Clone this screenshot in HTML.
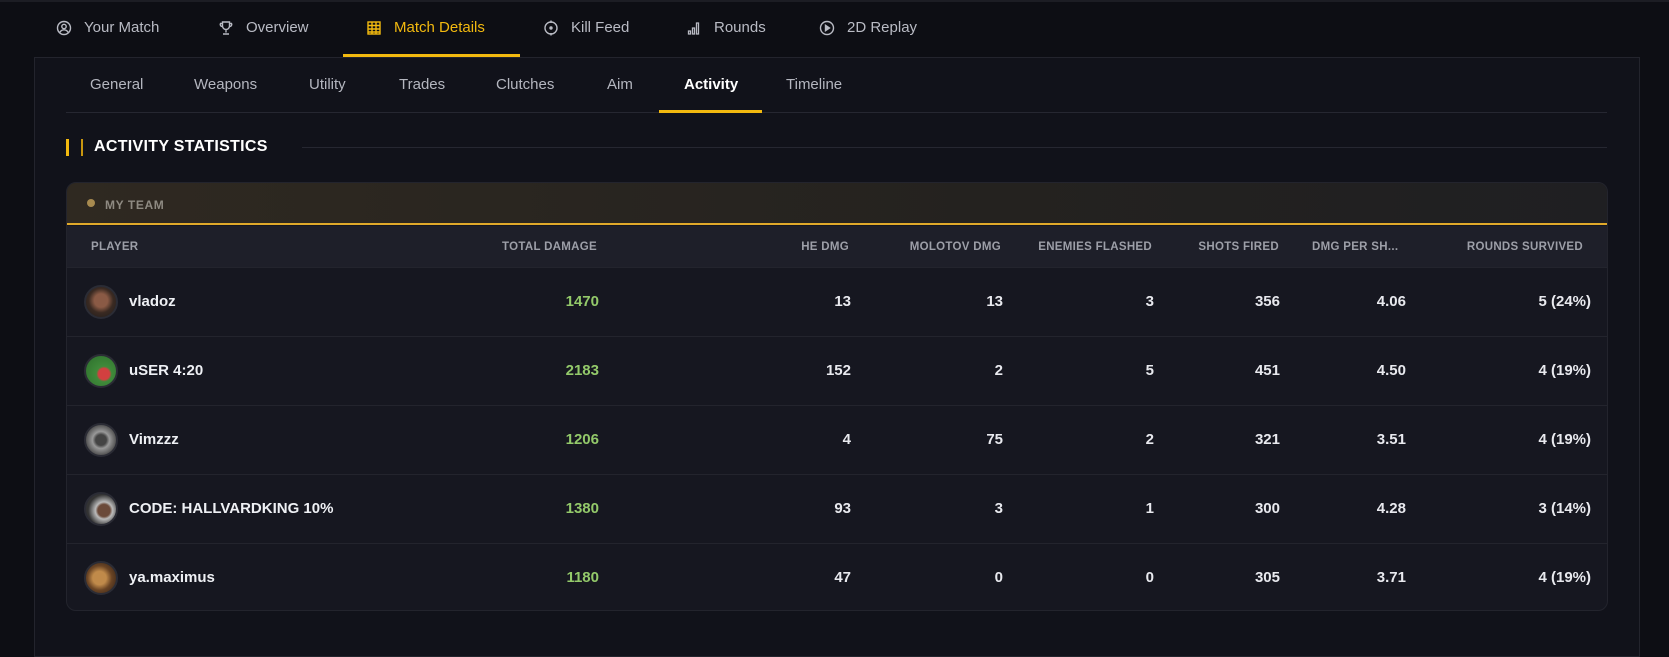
<!DOCTYPE html>
<html><head><meta charset="utf-8"><style>
*{margin:0;padding:0;box-sizing:border-box}
body{width:1669px;height:637px;background:#0d0e14;font-family:"Liberation Sans",sans-serif;position:relative;overflow:hidden;color:#e6e7ec}
.top{position:absolute;left:0;top:0;width:1669px;height:2px;background:#1c1d24}
.nav{position:absolute;top:19px;font-size:15px;color:#b9bbc4;display:flex;align-items:center;gap:12px;font-weight:500}
.nav svg{width:16px;height:16px}
.nav.act{color:#f2b90f}
.navul{position:absolute;left:343px;top:54px;width:177px;height:3px;background:#f2b90f}
.panel{position:absolute;left:34px;top:57px;width:1606px;height:600px;background:#11121a;border:1px solid #23242d}
.sub{position:absolute;top:76px;font-size:15px;color:#b4b6bf;font-weight:500}
.sub.act{color:#fff;font-weight:700}
.subline{position:absolute;left:66px;top:112px;width:1541px;height:1px;background:#262731}
.subul{position:absolute;left:659px;top:110px;width:103px;height:3px;background:#f2b90f}
.bar{position:absolute;top:139px;width:3px;height:17px;background:#f2b90f}
.h{position:absolute;left:94px;top:138px;font-size:16px;font-weight:700;letter-spacing:.3px;color:#fff}
.hline{position:absolute;left:302px;top:147px;width:1305px;height:1px;background:#262731}
.card{position:absolute;left:66px;top:182px;width:1542px;height:429px;background:#161720;border:1px solid #23242d;border-radius:10px;overflow:hidden}
.team{position:absolute;left:0;top:0;width:100%;height:42px;background:linear-gradient(90deg,#2f2921,#24221f 60%,#1f1f22);border-bottom:2px solid #e0a92a}
.team span{position:absolute;left:26px;top:15px;font-size:12px;font-weight:700;color:#8e8a82;letter-spacing:.6px}
.team i{position:absolute;left:24px;top:16px;width:8px;height:8px;border-radius:50%;background:#a78a4f;margin-left:-4px}
.team span{left:38px}
.thead{position:absolute;left:0;top:43px;width:100%;height:42px;background:#1e1f29}
.th{position:absolute;top:15px;font-size:11.5px;font-weight:700;color:#9d9fa8;letter-spacing:.3px;white-space:nowrap}
.row{position:absolute;left:0;width:100%;height:69px;border-top:1px solid #23242d}
.av{position:absolute;left:17px;top:17px;width:34px;height:34px;border-radius:50%;border:2px solid #2b2c35}
.nm{position:absolute;left:62px;top:25px;font-size:15px;font-weight:700;color:#eef0f4}
.v{position:absolute;top:25px;font-size:15px;font-weight:600;color:#e8e9ee;text-align:right;width:100px}
.g{color:#93c96a;font-weight:700}
</style></head><body>
<div class="top"></div>
<div class="nav" style="left:56px"><svg viewBox="0 0 16 16" fill="none" stroke="#b9bbc4" stroke-width="1.4"><circle cx="8" cy="8" r="6.5"/><circle cx="8" cy="6.5" r="2.2"/><path d="M3.8 12.5c1-2 2.5-2.7 4.2-2.7s3.2.7 4.2 2.7"/></svg>Your Match</div>
<div class="nav" style="left:218px"><svg viewBox="0 0 16 16" fill="none" stroke="#b9bbc4" stroke-width="1.4"><path d="M4.5 2h7v4a3.5 3.5 0 0 1-7 0z M4.5 3.5H2.5a2 2 0 0 0 2 3 M11.5 3.5h2a2 2 0 0 1-2 3 M8 9.5v3 M5 14h6"/></svg>Overview</div>
<div class="nav act" style="left:366px"><svg viewBox="0 0 16 16" fill="none" stroke="#f2b90f" stroke-width="1.4"><rect x="2" y="2" width="12" height="12"/><path d="M2 5.5h12M2 9h12M2 12h12M6 2v12M10 2v12"/></svg>Match Details</div>
<div class="nav" style="left:543px"><svg viewBox="0 0 16 16" fill="none" stroke="#b9bbc4" stroke-width="1.4"><circle cx="8" cy="8" r="6"/><circle cx="8" cy="8" r="1" fill="#b9bbc4"/><path d="M8 0.5v2.5M8 13v2.5"/></svg>Kill Feed</div>
<div class="nav" style="left:686px"><svg viewBox="0 0 16 16" fill="none" stroke="#b9bbc4" stroke-width="1.3"><path d="M2.5 11h2v3h-2zM6.5 8h2v6h-2zM10.5 3h2v11h-2z"/></svg>Rounds</div>
<div class="nav" style="left:819px"><svg viewBox="0 0 16 16" fill="none" stroke="#b9bbc4" stroke-width="1.4"><circle cx="8" cy="8" r="6.5"/><path d="M6.5 5.3v5.4L10.5 8z" fill="#b9bbc4"/></svg>2D Replay</div>
<div class="navul"></div>
<div class="panel"></div>
<div class="sub" style="left:90px">General</div>
<div class="sub" style="left:194px">Weapons</div>
<div class="sub" style="left:309px">Utility</div>
<div class="sub" style="left:399px">Trades</div>
<div class="sub" style="left:496px">Clutches</div>
<div class="sub" style="left:607px">Aim</div>
<div class="sub act" style="left:684px">Activity</div>
<div class="sub" style="left:786px">Timeline</div>
<div class="subline"></div><div class="subul"></div>
<div class="bar" style="left:66px"></div><div class="bar" style="left:81px;width:2px;background:#c9960f"></div>
<div class="h">ACTIVITY STATISTICS</div><div class="hline"></div>
<div class="card">
<div class="team"><i></i><span>MY TEAM</span></div>
<div class="thead">
<div class="th" style="left:24px">PLAYER</div>
<div class="th" style="right:1010px">TOTAL DAMAGE</div>
<div class="th" style="right:758px">HE DMG</div>
<div class="th" style="right:606px">MOLOTOV DMG</div>
<div class="th" style="right:455px">ENEMIES FLASHED</div>
<div class="th" style="right:328px">SHOTS FIRED</div>
<div class="th" style="left:1245px">DMG PER SH...</div>
<div class="th" style="right:24px">ROUNDS SURVIVED</div>
</div>
<div class="row" style="top:84px"><div class="av" style="background:radial-gradient(circle at 50% 45%,#8a5a45 0 30%,#3a2a22 55%,#1e1c1c)"></div><div class="nm">vladoz</div>
<div class="v g" style="left:432px">1470</div><div class="v" style="left:684px">13</div><div class="v" style="left:836px">13</div><div class="v" style="left:987px">3</div><div class="v" style="left:1113px">356</div><div class="v" style="left:1239px">4.06</div><div class="v" style="left:1424px">5 (24%)</div></div>
<div class="row" style="top:153px"><div class="av" style="background:radial-gradient(circle at 60% 60%,#d24040 0 22%,#3f8a3a 30%,#2d6e2c)"></div><div class="nm">uSER 4:20</div>
<div class="v g" style="left:432px">2183</div><div class="v" style="left:684px">152</div><div class="v" style="left:836px">2</div><div class="v" style="left:987px">5</div><div class="v" style="left:1113px">451</div><div class="v" style="left:1239px">4.50</div><div class="v" style="left:1424px">4 (19%)</div></div>
<div class="row" style="top:222px"><div class="av" style="background:radial-gradient(circle,#444 0 25%,#999 40%,#555 70%)"></div><div class="nm">Vimzzz</div>
<div class="v g" style="left:432px">1206</div><div class="v" style="left:684px">4</div><div class="v" style="left:836px">75</div><div class="v" style="left:987px">2</div><div class="v" style="left:1113px">321</div><div class="v" style="left:1239px">3.51</div><div class="v" style="left:1424px">4 (19%)</div></div>
<div class="row" style="top:291px"><div class="av" style="background:radial-gradient(circle at 60% 55%,#6b4a3a 0 25%,#bbb 35%,#333 65%)"></div><div class="nm">CODE: HALLVARDKING 10%</div>
<div class="v g" style="left:432px">1380</div><div class="v" style="left:684px">93</div><div class="v" style="left:836px">3</div><div class="v" style="left:987px">1</div><div class="v" style="left:1113px">300</div><div class="v" style="left:1239px">4.28</div><div class="v" style="left:1424px">3 (14%)</div></div>
<div class="row" style="top:360px"><div class="av" style="background:radial-gradient(circle at 45% 50%,#c08a4a 0 30%,#6a4424 55%,#2a1d16)"></div><div class="nm">ya.maximus</div>
<div class="v g" style="left:432px">1180</div><div class="v" style="left:684px">47</div><div class="v" style="left:836px">0</div><div class="v" style="left:987px">0</div><div class="v" style="left:1113px">305</div><div class="v" style="left:1239px">3.71</div><div class="v" style="left:1424px">4 (19%)</div></div>
</div>
</body></html>
